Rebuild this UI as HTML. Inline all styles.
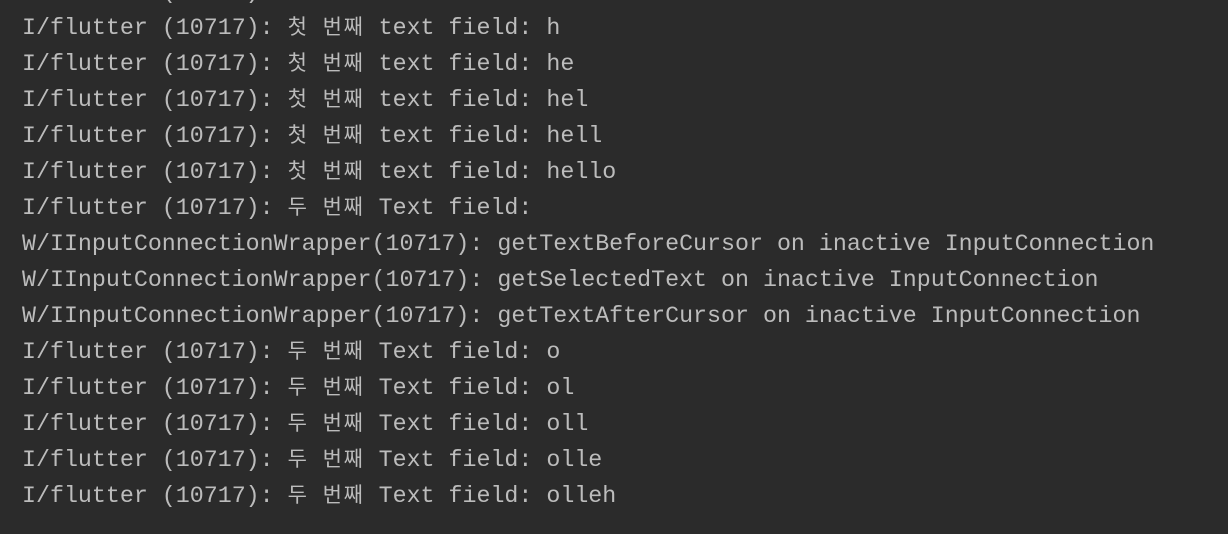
<html><head><style>
body{margin:0;background:#2b2b2b;width:1228px;height:534px;overflow:hidden}
.w{position:absolute;left:22px;top:-26px;font-family:"Liberation Mono",monospace;font-size:23.3px;color:#bcbcbc}
.w div{height:36px;line-height:36px;white-space:pre}
.k{display:inline-block;width:21px;font-family:"Noto Sans CJK KR",sans-serif;font-size:21px;line-height:20px;vertical-align:baseline}
</style></head><body><div class="w"><div>I/flutter (10717): <span class="k">첫</span> <span class="k">번</span><span class="k">째</span> text field:</div><div>I/flutter (10717): <span class="k">첫</span> <span class="k">번</span><span class="k">째</span> text field: h</div><div>I/flutter (10717): <span class="k">첫</span> <span class="k">번</span><span class="k">째</span> text field: he</div><div>I/flutter (10717): <span class="k">첫</span> <span class="k">번</span><span class="k">째</span> text field: hel</div><div>I/flutter (10717): <span class="k">첫</span> <span class="k">번</span><span class="k">째</span> text field: hell</div><div>I/flutter (10717): <span class="k">첫</span> <span class="k">번</span><span class="k">째</span> text field: hello</div><div>I/flutter (10717): <span class="k">두</span> <span class="k">번</span><span class="k">째</span> Text field:</div><div>W/IInputConnectionWrapper(10717): getTextBeforeCursor on inactive InputConnection</div><div>W/IInputConnectionWrapper(10717): getSelectedText on inactive InputConnection</div><div>W/IInputConnectionWrapper(10717): getTextAfterCursor on inactive InputConnection</div><div>I/flutter (10717): <span class="k">두</span> <span class="k">번</span><span class="k">째</span> Text field: o</div><div>I/flutter (10717): <span class="k">두</span> <span class="k">번</span><span class="k">째</span> Text field: ol</div><div>I/flutter (10717): <span class="k">두</span> <span class="k">번</span><span class="k">째</span> Text field: oll</div><div>I/flutter (10717): <span class="k">두</span> <span class="k">번</span><span class="k">째</span> Text field: olle</div><div>I/flutter (10717): <span class="k">두</span> <span class="k">번</span><span class="k">째</span> Text field: olleh</div></div></body></html>
